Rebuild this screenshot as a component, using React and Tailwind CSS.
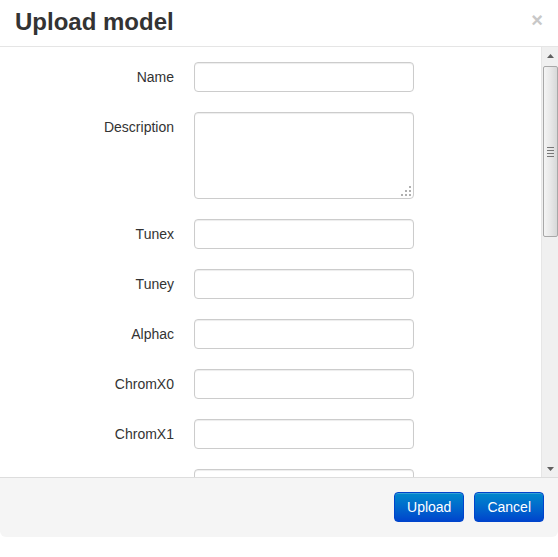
import React from 'react';

const fields = ['Name', 'Description', 'Tunex', 'Tuney', 'Alphac', 'ChromX0', 'ChromX1', ''];

const FakeScrollbar = () => (
  <div className="w-[17px] h-full bg-[#f0f0f0] border-l border-[#e6e6e6] flex flex-col items-center">
    <div className="h-[17px] w-full flex items-center justify-center">
      <svg width="7" height="4" viewBox="0 0 7 4"><path d="M3.5 0L7 4H0z" fill="#606060" /></svg>
    </div>
    <div className="mt-[2px] h-[171px] w-[15px] rounded-[2px] border border-[#a8a8a8] bg-gradient-to-r from-[#f4f4f4] via-[#e8e8e8] to-[#d8d8d8] flex items-center justify-center">
      <div className="flex flex-col gap-[2px]">
        <div className="w-[7px] h-px bg-[#777]" />
        <div className="w-[7px] h-px bg-[#777]" />
        <div className="w-[7px] h-px bg-[#777]" />
        <div className="w-[7px] h-px bg-[#777]" />
      </div>
    </div>
    <div className="flex-1" />
    <div className="h-[17px] w-full flex items-center justify-center">
      <svg width="7" height="4" viewBox="0 0 7 4"><path d="M0 0h7L3.5 4z" fill="#606060" /></svg>
    </div>
  </div>
);

const Dot = ({ on }) => <span className={on ? 'w-[2px] h-[2px] bg-[#b0b0b0]' : 'w-[2px] h-[2px]'} />;

export default function App() {
  return (
    <div className="w-[558px] h-[557px] bg-white font-['Liberation_Sans',Arial,sans-serif] text-[#333] overflow-hidden">
      {/* header */}
      <div className="h-[47px] border-b border-[#e5e5e5] flex items-center justify-between pl-[15px] pr-[15px]">
        <h3 className="text-[24px] font-bold leading-none text-[#333] -mt-[2px]">Upload model</h3>
        <span className="text-[#c8c8c8] text-[20px] font-bold leading-none -mt-[6px]">×</span>
      </div>

      {/* body */}
      <div className="h-[430px] flex">
        <div className="flex-1 overflow-hidden pt-[15px] pl-[14px]">
          {fields.map((f, i) => (
            <div key={i} className="flex mb-[20px]">
              <label className="w-[160px] text-right text-[14px] leading-[20px] pt-[5px]">{f}</label>
              <div className="ml-[20px]">
                {f === 'Description' ? (
                  <div className="relative w-[220px] h-[87px] border border-[#ccc] rounded-[4px] bg-white shadow-[inset_0_1px_1px_rgba(0,0,0,0.075)]">
                    <div className="absolute right-[2px] bottom-[2px] grid grid-cols-3 gap-[2px]">
                      <Dot />
                      <Dot />
                      <Dot on />
                      <Dot />
                      <Dot on />
                      <Dot on />
                      <Dot on />
                      <Dot on />
                      <Dot on />
                    </div>
                  </div>
                ) : (
                  <div className="w-[220px] h-[30px] border border-[#ccc] rounded-[4px] bg-white shadow-[inset_0_1px_1px_rgba(0,0,0,0.075)]" />
                )}
              </div>
            </div>
          ))}
        </div>
        <FakeScrollbar />
      </div>

      {/* footer */}
      <div className="h-[60px] bg-[#f5f5f5] border-t border-[#ddd] rounded-b-[6px] flex items-center justify-end gap-[10px] pr-[14px] pb-[1px]">
        <button className="h-[30px] px-[12px] rounded-[4px] text-white text-[14px] bg-gradient-to-b from-[#0088cc] to-[#0044cc] border border-[#0044cc] shadow-[inset_0_1px_0_rgba(255,255,255,0.2)]">
          Upload
        </button>
        <button className="h-[30px] px-[12px] rounded-[4px] text-white text-[14px] bg-gradient-to-b from-[#0088cc] to-[#0044cc] border border-[#0044cc] shadow-[inset_0_1px_0_rgba(255,255,255,0.2)]">
          Cancel
        </button>
      </div>
    </div>
  );
}
